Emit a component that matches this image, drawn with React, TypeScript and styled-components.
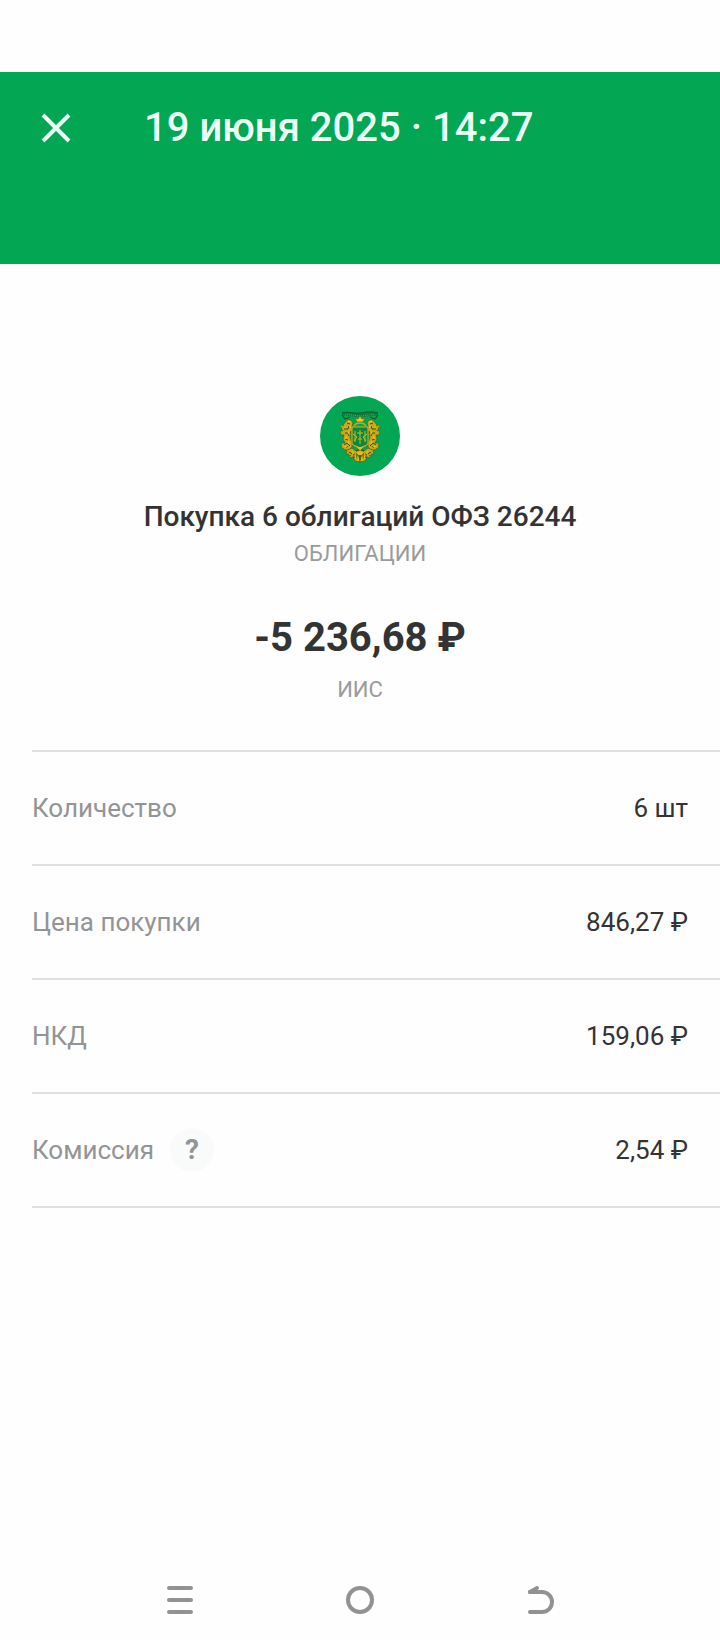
import React, { FC } from 'react'
import styled, { createGlobalStyle } from 'styled-components';

interface Detail {
  label: string;
  value: string;
  hint?: boolean;
}

const DETAILS: Detail[] = [
  { label: 'Количество', value: '6 шт' },
  { label: 'Цена покупки', value: '846,27 ₽' },
  { label: 'НКД', value: '159,06 ₽' },
  { label: 'Комиссия', value: '2,54 ₽', hint: true },
];

const CloseIcon: FC = () => (
  <svg width="32" height="32" viewBox="0 0 32 32" fill="none" stroke="#ecfff5" strokeWidth="4" aria-hidden="true">
    <path d="M3 3 29 29M29 3 3 29" />
  </svg>
)

// one half of the coat of arms, mirrored for the other side
const EmblemSide: FC = () => (
  <>
    <path d="M27 24l4 0 2 3-1 3 0 5-2 6 2 6 0 4-3 3-4 0-4-3 1-4 3 0-2-4 1-4-3 0-1-3 3-1-2-3 3-1-1-2z" fill="#c9a61c" stroke="#3b5a12" strokeWidth="0.6" />
    <path d="M27 27l3 1M24 33l4 0M25 37l3 0 1 3M25 43l3 1M24 49l3-2 3 3M29 30l-1 3M26 52l2-2M31 35l-1 3" stroke="#3b5512" strokeWidth="1" />
    <path d="M28 25l3 1M26 31l-3 0M28 35l1 3M26 40v3M28 45l1 3M24 50l3 1M30 29v3" stroke="#f0c822" strokeWidth="1.1" />
    <path d="M21 30l3 2M21 36l3 0M22 48l2 2" stroke="#c9a61c" strokeWidth="1.6" />
    <path d="M27 54l-1 4 3 0 1 4 3-1 2 4 5 1V53l-4 2-4-3z" fill="#c9a61c" stroke="#3b5a12" strokeWidth="0.6" />
    <path d="M29 56l3 2M34 57v5M37 57v6M31 60l-2-2M36 55l3-1" stroke="#254b16" strokeWidth="1" />
    <path d="M32 55l2 3M35 59l1 4M29 58l2 1M38 60v5" stroke="#f0c822" strokeWidth="1" />
  </>
)

const Emblem: FC = () => (
  <svg width="80" height="80" viewBox="0 0 80 80" fill="none" role="img" aria-label="ОФЗ">
    <path d="M22 17c7-2 12 1 18 0s11-2 18 0v3c-7-1-12 1-18 1s-11-2-18-1z" fill="#127a3e" />
    <path d="M22 17c7-2 12 1 18 0s11-2 18 0" stroke="#0b5a35" strokeWidth="1" />
    <path d="M25 19c6-1 10 1 15 1s9-2 15-1" stroke="#6da544" strokeWidth="1" strokeDasharray="1 1" />
    <path d="M22 19l3 4 5-2M58 19l-3 4-5-2" stroke="#0b5a35" strokeWidth="1.2" />
    <EmblemSide />
    <g transform="matrix(-1 0 0 1 80 0)">
      <EmblemSide />
    </g>
    <path d="M37 26l-2-4 3 1 2-3 2 3 3-1-2 4z" fill="#f0c822" stroke="#52650f" strokeWidth="0.6" />
    <path d="M34 30c1-2 3-3 6-3s5 1 6 3" stroke="#c9a61c" strokeWidth="1.4" />
    <path d="M32 31h16v16c0 3-5 3-8 5-3-2-8-2-8-5z" fill="#12843c" stroke="#d6b31d" strokeWidth="1.1" />
    <path d="M35 35v11M40 34v14M45 35v11M33 38l4 3-3 4M47 38l-4 3 3 4M37 37h6M38 43h4" stroke="#b9c12e" strokeWidth="1" />
    <path d="M37 51l3 3 3-3M37 57l3-2 3 2-3 3z" fill="#e3bd1d" stroke="#e3bd1d" strokeWidth="0.8" />
    <path d="M38 60h4M40 59v5" stroke="#254b16" strokeWidth="1" />
  </svg>
)

const App: FC = () => {
  return (
    <>
      <GlobalStyle />
      <StyledPage>
        <StyledHeader>
          <StyledIconButton type="button" aria-label="Закрыть">
            <CloseIcon />
          </StyledIconButton>
          <StyledHeaderTitle>19 июня 2025 · 14:27</StyledHeaderTitle>
        </StyledHeader>
        <StyledMain>
          <StyledSummary>
            <StyledLogo>
              <Emblem />
            </StyledLogo>
            <StyledName>Покупка 6 облигаций ОФЗ 26244</StyledName>
            <StyledCaption>ОБЛИГАЦИИ</StyledCaption>
            <StyledAmount>-5 236,68 ₽</StyledAmount>
            <StyledCaption>ИИС</StyledCaption>
          </StyledSummary>
          <StyledDetails>
            {
              DETAILS.map(({ label, value, hint }) => (
                <StyledRow key={label}>
                  <StyledLabel>
                    {label}
                    {hint && <StyledHint type="button" aria-label="О комиссии">?</StyledHint>}
                  </StyledLabel>
                  <StyledValue>{value}</StyledValue>
                </StyledRow>
              ))
            }
          </StyledDetails>
        </StyledMain>
        <StyledNav>
          <StyledIconButton type="button" aria-label="Недавние">
            <svg width="32" height="32" viewBox="0 0 32 32" fill="none" stroke="#929292" strokeWidth="4" strokeLinecap="round">
              <path d="M5 4h22M5 16h22M5 28h22" />
            </svg>
          </StyledIconButton>
          <StyledIconButton type="button" aria-label="Домой">
            <svg width="32" height="32" viewBox="0 0 32 32" fill="none" stroke="#929292" strokeWidth="4">
              <circle cx="16" cy="16" r="12" />
            </svg>
          </StyledIconButton>
          <StyledIconButton type="button" aria-label="Назад">
            <svg width="32" height="32" viewBox="0 0 32 32" fill="none" stroke="#929292" strokeWidth="4" strokeLinecap="round" strokeLinejoin="round">
              <path d="M6 28h12a10 10 0 0 0 0-20H6" />
              <path d="M13 4 6 8" />
            </svg>
          </StyledIconButton>
        </StyledNav>
      </StyledPage>
    </>
  )
}

const GlobalStyle = createGlobalStyle`
  * {
    box-sizing: border-box;
  }

  body {
    margin: 0;
    background: #fefefe;
    color: #333;
    font-family: Roboto, "Noto Sans", sans-serif;
  }
`;

const StyledPage = styled.div`
  display: flex;
  flex-direction: column;
  min-height: 100vh;
  padding-top: 72px;
`;

const StyledHeader = styled.header`
  display: flex;
  align-items: flex-start;
  gap: 64px;
  height: 192px;
  padding: 32px 32px 0;
  background: #02a653;
`;

const StyledIconButton = styled.button`
  display: flex;
  align-items: center;
  justify-content: center;
  width: 48px;
  height: 48px;
  padding: 0;
  border: none;
  background: none;
  cursor: pointer;
`;

const StyledHeaderTitle = styled.h1`
  margin: 0;
  color: #ecfff5;
  font-size: 40px;
  font-weight: 500;
  line-height: 48px;
`;

const StyledMain = styled.main`
  flex: 1;
`;

const StyledSummary = styled.section`
  display: flex;
  flex-direction: column;
  align-items: center;
  padding: 132px 32px 44px;
  text-align: center;
`;

const StyledLogo = styled.div`
  width: 80px;
  height: 80px;
  border-radius: 50%;
  background: #02a653;
`;

const StyledName = styled.h2`
  margin: 20px 0 0;
  font-size: 28px;
  font-weight: 500;
  line-height: 42px;
`;

const StyledCaption = styled.p`
  margin: 0;
  color: #999b9c;
  font-size: 22px;
  line-height: 32px;
`;

const StyledAmount = styled.p`
  margin: 40px 0 8px;
  font-size: 40px;
  font-weight: 700;
  line-height: 56px;
`;

const StyledDetails = styled.dl`
  margin: 0 0 0 32px;
  border-top: 2px solid #e0e0e0;
`;

const StyledRow = styled.div`
  display: flex;
  align-items: center;
  justify-content: space-between;
  height: 114px;
  padding-right: 32px;
  border-bottom: 2px solid #e0e0e0;
  font-size: 26px;
  line-height: 32px;
`;

const StyledLabel = styled.dt`
  display: flex;
  align-items: center;
  gap: 16px;
  color: #929495;
`;

const StyledValue = styled.dd`
  margin: 0;
`;

const StyledHint = styled.button`
  width: 44px;
  height: 44px;
  padding: 0;
  border: none;
  border-radius: 50%;
  background: #f9fbfb;
  color: #929495;
  font: 700 28px/44px Roboto, "Noto Sans", sans-serif;
  cursor: pointer;
`;

const StyledNav = styled.nav`
  display: grid;
  grid-template-columns: repeat(3, 1fr);
  justify-items: center;
  padding: 16px 12.5%;
`;

export default App
